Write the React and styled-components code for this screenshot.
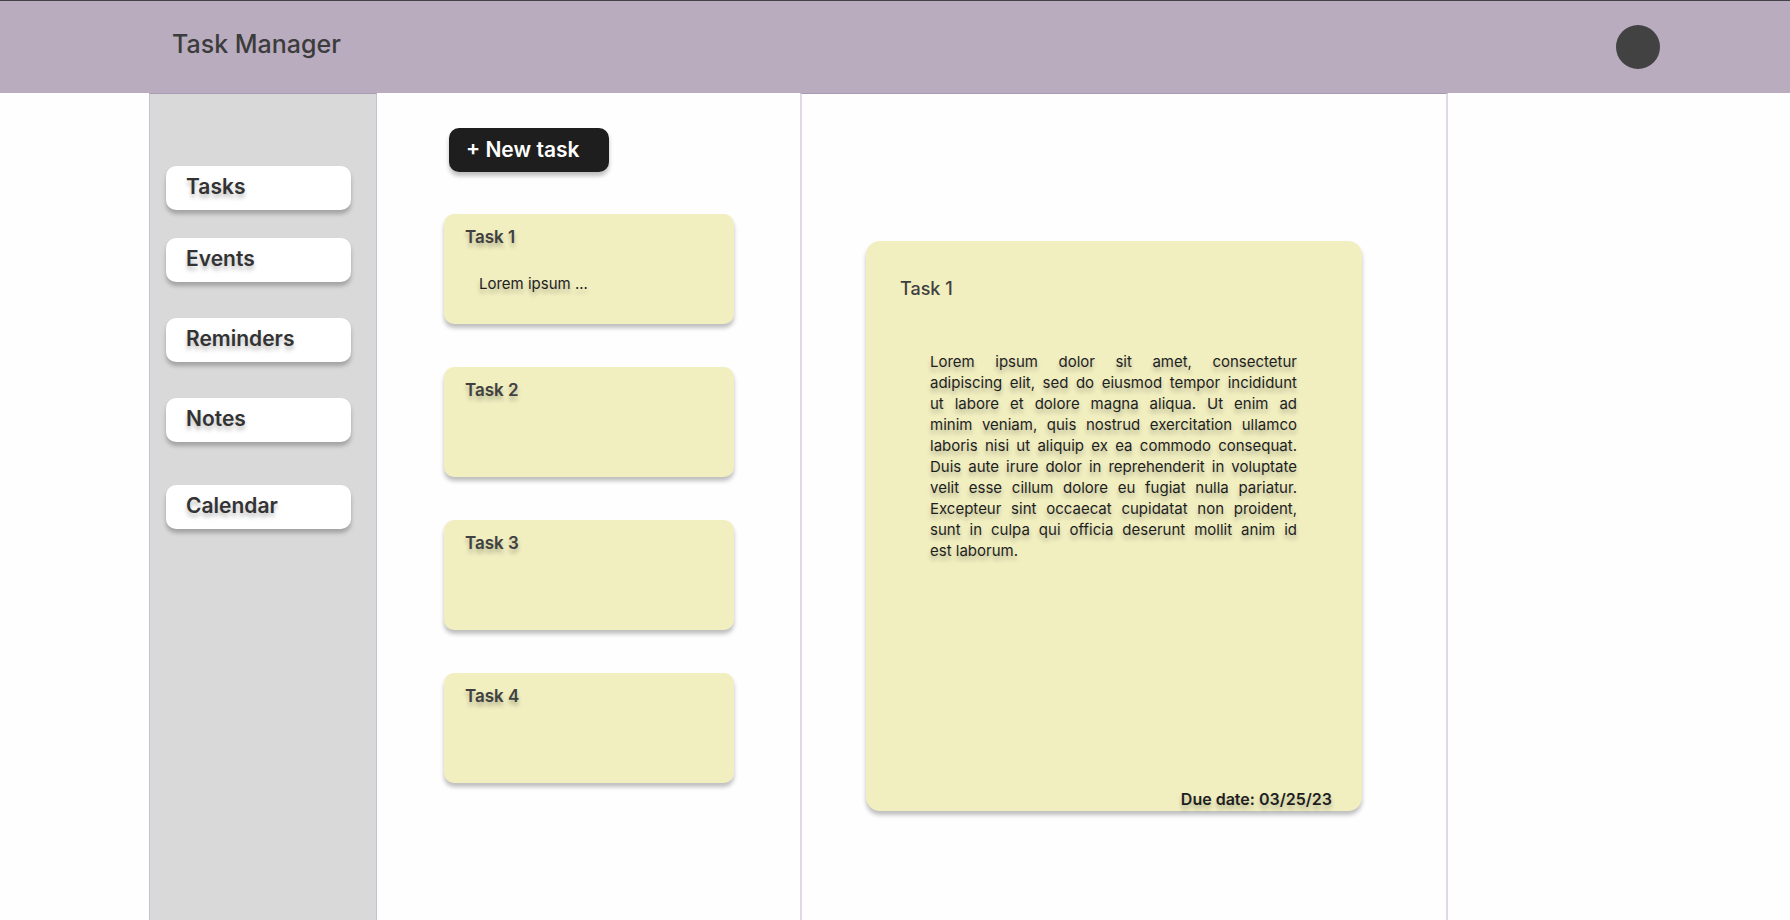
import React, { useState } from "react";
import styled, { createGlobalStyle } from "styled-components";

const GlobalStyle = createGlobalStyle`
  * { box-sizing: border-box; }
  body {
    margin: 0;
    background: #fefefe;
    font-family: Inter, "Liberation Sans", sans-serif;
  }
  h1, h2, p, ul { margin: 0; padding: 0; }
  button { font-family: inherit; cursor: pointer; }
`;

const textShadow = "0 4px 4px rgba(0, 0, 0, 0.25)";
const boxShadow = "0 4px 4px rgba(0, 0, 0, 0.25)";

const Page = styled.div`
  min-height: 100vh;
  display: flex;
  flex-direction: column;
`;

const Header = styled.header`
  display: flex;
  justify-content: space-between;
  align-items: flex-start;
  height: 93px;
  padding: 24px 130px 0 172px;
  border-top: 1px solid #444246;
  background: #b9acbf;
`;

const Brand = styled.h1`
  font-size: 25px;
  line-height: 38px;
  font-weight: 500;
  color: #3c3c3c;
`;

const Avatar = styled.button`
  width: 44px;
  height: 44px;
  padding: 0;
  border: 0;
  border-radius: 50%;
  background: #424242;
`;

const Columns = styled.div`
  flex: 1;
  display: grid;
  grid-template-columns: 149fr 228fr 423fr 648fr 342fr;
`;

const Sidebar = styled.nav`
  grid-column: 2;
  border: 1px solid #c9bfd0;
  border-top-color: #a99bb4;
  border-bottom: 0;
  background: #d9d9d9;
  padding: 72px 25px 0 16px;
`;

const NavList = styled.ul`
  list-style: none;
  display: flex;
  flex-direction: column;
`;

const NavItem = styled.li`
  margin-bottom: ${(p) => p.$gap}px;
`;

const NavButton = styled.button`
  display: block;
  width: 100%;
  height: 44px;
  padding: 0 0 2px 20px;
  border: 0;
  border-radius: 10px;
  background: #fff;
  box-shadow: ${boxShadow};
  text-align: left;
  font-size: 21px;
  line-height: 42px;
  font-weight: 600;
  color: #333;
  text-shadow: ${textShadow};
`;

const TaskColumn = styled.section`
  padding: 35px 66px 40px 67px;
`;

const NewTask = styled.button`
  display: block;
  width: 160px;
  height: 44px;
  margin: 0 0 42px 5px;
  padding: 0 0 0 17px;
  border: 0;
  border-radius: 10px;
  background: #1e1e1e;
  box-shadow: ${boxShadow};
  text-align: left;
  white-space: nowrap;
  font-size: 21px;
  line-height: 44px;
  font-weight: 600;
  color: #fff;
`;

const TaskList = styled.div`
  display: flex;
  flex-direction: column;
  gap: 43px;
`;

const TaskCard = styled.article`
  height: 110px;
  padding: 11px 21px;
  border-radius: 10px;
  background: #f1efc0;
  box-shadow: ${boxShadow};
  cursor: pointer;
`;

const TaskTitle = styled.h2`
  font-size: 17px;
  line-height: 24px;
  font-weight: 600;
  color: #404040;
  text-shadow: ${textShadow};
`;

const TaskPreview = styled.p`
  margin: 24px 0 0 14px;
  font-size: 15px;
  line-height: 21px;
  color: #1e1e1e;
  text-shadow: ${textShadow};
`;

const DetailColumn = styled.section`
  border: 2px solid #e0d9e3;
  border-top: 1px solid #a99bb4;
  border-bottom: 0;
  padding: 147px 84px 40px 64px;
`;

const DetailCard = styled.article`
  display: flex;
  flex-direction: column;
  min-height: 570px;
  padding: 36px 30px 0 34px;
  border-radius: 14px;
  background: #f1efc0;
  box-shadow: ${boxShadow};
`;

const DetailTitle = styled.h2`
  font-size: 18px;
  line-height: 24px;
  font-weight: 500;
  color: #404040;
`;

const DetailBody = styled.p`
  margin: 50px 35px 24px 30px;
  font-size: 15px;
  line-height: 21px;
  text-align: justify;
  color: #1e1e1e;
  text-shadow: ${textShadow};
`;

const Line = styled.span`
  display: block;
  text-align-last: justify;

  &:last-child {
    text-align-last: left;
  }
`;

const DueDate = styled.p`
  margin-top: auto;
  text-align: right;
  font-size: 16px;
  line-height: 24px;
  font-weight: 600;
  color: #1e1e1e;
  text-shadow: ${textShadow};
`;

const sections = [
  { name: "Tasks", gap: 28 },
  { name: "Events", gap: 36 },
  { name: "Reminders", gap: 36 },
  { name: "Notes", gap: 43 },
  { name: "Calendar", gap: 0 },
];

const tasks = [
  {
    title: "Task 1",
    preview: "Lorem ipsum ...",
    due: "03/25/23",
    body: [
      "Lorem ipsum dolor sit amet, consectetur",
      "adipiscing elit, sed do eiusmod tempor incididunt",
      "ut labore et dolore magna aliqua. Ut enim ad",
      "minim veniam, quis nostrud exercitation ullamco",
      "laboris nisi ut aliquip ex ea commodo consequat.",
      "Duis aute irure dolor in reprehenderit in voluptate",
      "velit esse cillum dolore eu fugiat nulla pariatur.",
      "Excepteur sint occaecat cupidatat non proident,",
      "sunt in culpa qui officia deserunt mollit anim id",
      "est laborum.",
    ],
  },
  { title: "Task 2" },
  { title: "Task 3" },
  { title: "Task 4" },
];

export default function App() {
  const [selected, setSelected] = useState(0);
  const task = tasks[selected];
  return (
    <Page>
      <GlobalStyle />
      <Header>
        <Brand>Task Manager</Brand>
        <Avatar type="button" aria-label="Account" />
      </Header>
      <Columns>
        <Sidebar>
          <NavList>
            {sections.map((s) => (
              <NavItem key={s.name} $gap={s.gap}>
                <NavButton type="button">{s.name}</NavButton>
              </NavItem>
            ))}
          </NavList>
        </Sidebar>
        <TaskColumn>
          <NewTask type="button">+ New task</NewTask>
          <TaskList>
            {tasks.map((t, i) => (
              <TaskCard key={t.title} onClick={() => setSelected(i)}>
                <TaskTitle>{t.title}</TaskTitle>
                {t.preview && <TaskPreview>{t.preview}</TaskPreview>}
              </TaskCard>
            ))}
          </TaskList>
        </TaskColumn>
        <DetailColumn>
          <DetailCard>
            <DetailTitle>{task.title}</DetailTitle>
            {task.body && (
              <DetailBody>
                {task.body.map((line) => (
                  <Line key={line}>{line}</Line>
                ))}
              </DetailBody>
            )}
            {task.due && <DueDate>Due date: {task.due}</DueDate>}
          </DetailCard>
        </DetailColumn>
      </Columns>
    </Page>
  );
}
